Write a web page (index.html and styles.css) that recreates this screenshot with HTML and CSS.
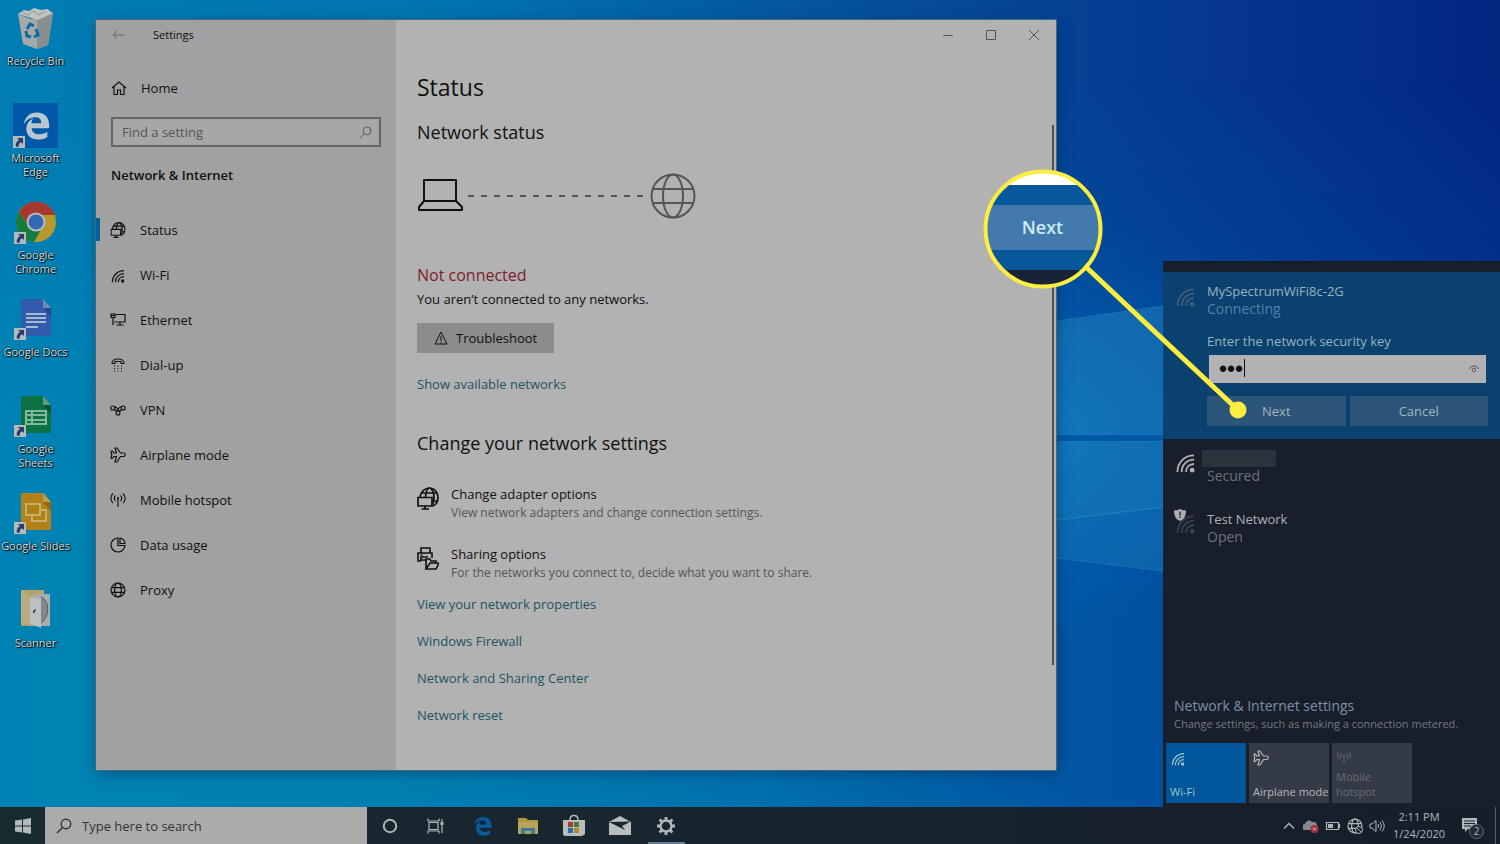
FILE: index.html
```
<!DOCTYPE html>
<html lang="en">
<head>
<meta charset="utf-8">
<title>Settings</title>
<link rel="stylesheet" href="styles.css">
</head>
<body>
<svg class="defs" aria-hidden="true">
  <symbol id="wifi" viewBox="0 0 20 20"><g fill="none" stroke="currentColor" stroke-width="1.900"><path d="M1.500 19C1.500 9 9 1.500 19 1.500"/><path d="M6 19C6 11.500 11.500 6 19 6"/><path d="M10.500 19C10.500 14 14 10.500 19 10.500"/></g><circle cx="17" cy="17" r="2.500" fill="currentColor"/></symbol>
  <symbol id="globe" viewBox="0 0 16 16"><g fill="none" stroke="currentColor" stroke-width="1.200"><circle cx="8" cy="8" r="7"/><ellipse cx="8" cy="8" rx="3.400" ry="7"/><path d="M1.400 5.700h13.200M1.400 10.300h13.200"/></g></symbol>
  <symbol id="netglobe" viewBox="0 0 22 23"><g fill="none" stroke="currentColor" stroke-width="1.700"><path d="M3 10C4 4.500 8 1 12.500 1S21 5 21 10.500c0 4-2 7-5 8.500"/><path d="M8.500 10C9 5 10.500 1 12.500 1S17 5 17 10.500c0 4-1 6.500-2 8M5 6h15M16 14h5"/><path d="M1 10.500h14V19H1zM8 19v3M4.500 22h7.500"/></g></symbol>
  <symbol id="plane" viewBox="0 0 16 16"><path d="M5 1h2l3.500 5H14c1.700.300 1.700 3.200 0 3.500h-3.500L7 15H5l1.500-5.500H3.700L2.500 11.500H1L1.700 7.800 1 4h1.500l1.200 2h2.800z" fill="none" stroke="currentColor" stroke-width="1.200" stroke-linejoin="round"/></symbol>
  <symbol id="hotspot" viewBox="0 0 16 16"><g fill="none" stroke="currentColor" stroke-width="1.100"><path d="M3 1.500C.200 4 .200 8.500 3 11M5.500 3.500c-1.600 1.500-1.600 4 0 5.500M13 1.500c2.800 2.500 2.800 7 0 9.500M10.500 3.500c1.600 1.500 1.600 4 0 5.500M8 6v9"/></g><circle cx="8" cy="6" r="1" fill="currentColor"/></symbol>
  <symbol id="search" viewBox="0 0 16 16"><g fill="none" stroke="currentColor" stroke-width="1.200"><circle cx="10" cy="6" r="4.800"/><path d="M6.500 9.500L1 15"/></g></symbol>
  <symbol id="edge" viewBox="0 0 32 32"><path d="M2 15C3 6 9 1 17 1c9 0 14 6 14 14v4H11c.500 5 4 7 9 7 3 0 6-1 9-2.500V29c-3 2-7 3-11 3C10 32 5 27 5 20c0-6 3-10 8-12-1.500 1.500-2 3.500-2 5.500h11C22 9 20 6.500 16 6.500 10 6.500 5 9 2 15z" fill="currentColor"/></symbol>
  <symbol id="shortcut" viewBox="0 0 12 12"><path d="M0 0h12v12H0z" fill="#b5b9bc"/><path d="M4 2h6v6L8 6.200C6 7.500 5.500 9 5.800 10.800H3C2 8 3.500 5.500 6 4z" fill="#253e6b"/></symbol>
</svg>

<div class="screen">
  <main class="desktop">
    <svg class="wallpaper" viewBox="0 0 1500 807" preserveAspectRatio="none" aria-hidden="true">
      <defs>
        <linearGradient id="base" x1="0" x2="1" y1="0" y2="0"><stop offset="0" stop-color="#007eb3"/><stop offset=".3" stop-color="#0074b0"/><stop offset=".6" stop-color="#064d99"/><stop offset=".78" stop-color="#053a90"/><stop offset="1" stop-color="#032681"/></linearGradient>
        <linearGradient id="low" x1="0" x2="1" y1="0" y2="0"><stop offset="0" stop-color="#0083b4"/><stop offset=".25" stop-color="#0080b1"/><stop offset=".5" stop-color="#0070ad"/><stop offset=".72" stop-color="#0055a2"/><stop offset="1" stop-color="#003f93"/></linearGradient>
        <linearGradient id="fade" x1="0" x2="0" y1="0" y2="1"><stop offset=".1" stop-color="#000"/><stop offset=".65" stop-color="#fff"/></linearGradient>
        <mask id="lowmask"><path d="M0 0h1500v807H0z" fill="url(#fade)"/></mask>
        <radialGradient id="glow"><stop offset="0" stop-color="#0879c6" stop-opacity=".6"/><stop offset="1" stop-color="#0060b4" stop-opacity="0"/></radialGradient>
      </defs>
      <path d="M0 0h1500v807H0z" fill="url(#base)"/>
      <path d="M0 0h1500v807H0z" fill="url(#low)" mask="url(#lowmask)"/>
      <ellipse cx="1050" cy="430" rx="250" ry="210" fill="url(#glow)"/>
      <g fill="#2388c0" fill-opacity=".45" stroke="#2b94c4" stroke-opacity=".4">
        <path d="M1000 329L1163 306V435H1000z"/><path d="M1000 441h163v66l-163 20z"/><path d="M1000 527l163-20v64l-163-20z" fill-opacity=".3"/>
      </g>
      <path d="M1000 435h163v6h-163z" fill="#0059a4"/>
    </svg>

    <nav class="shortcuts" aria-label="Desktop">
      <a class="shortcut" href="#"><svg class="shortcut-icon" viewBox="0 0 45 45"><path d="M5 8l13 5 22-6-5 32-11 4-14-5z" fill="#a6a9aa"/><path d="M24 12l16-5-5 32-11 4z" fill="#898e90"/><path d="M5 8l6-4 5 1 5-3 7 2 6-1 6 4-15 7z" fill="#c0c2c2"/><path d="M10 7l5 2 5-4 6 4 6-4" fill="none" stroke="#8e9495"/><g fill="none" stroke="#0d68a5" stroke-width="3"><path d="M14 23l3-5 4 2M23 23l2 6-4 2M18 31l-4-1-1-5"/></g></svg><span>Recycle Bin</span></a>
      <a class="shortcut" href="#"><svg class="shortcut-icon" viewBox="0 0 45 45"><path d="M0 0h45v45H0z" fill="#0058a8"/><use href="#edge" x="9" y="8" width="28" height="29" color="#b8c8ce"/><use href="#shortcut" y="33" width="12" height="12"/></svg><span>Microsoft<br>Edge</span></a>
      <a class="shortcut" href="#"><svg class="shortcut-icon" viewBox="0 0 45 45"><circle cx="23" cy="22" r="20" fill="#b8982b"/><path d="M5.700 12A20 20 0 0 1 42 15H23a8 8 0 0 0-7 11z" fill="#a73830"/><path d="M5.700 12A20 20 0 0 0 21 42l9-16c-4 6-11 5-14 0z" fill="#177b3e"/><circle cx="23" cy="22" r="9.500" fill="#b8bdc0"/><circle cx="23" cy="22" r="7.500" fill="#3467b5"/><use href="#shortcut" x="1" y="32" width="12" height="12"/></svg><span>Google<br>Chrome</span></a>
      <a class="shortcut" href="#"><svg class="shortcut-icon" viewBox="0 0 45 45"><path d="M8 2h22l8 9v28H8z" fill="#315cac"/><path d="M30 2l8 9h-8z" fill="#718dba"/><path d="M30 11h8v9z" fill="#244a91"/><path d="M13 17h20M13 21h20M13 25h20M13 30h12" stroke="#a7b8cf" stroke-width="2"/><use href="#shortcut" x="1" y="31" width="12" height="12"/></svg><span>Google Docs</span></a>
      <a class="shortcut" href="#"><svg class="shortcut-icon" viewBox="0 0 45 45"><path d="M8 2h22l8 9v28H8z" fill="#0c7145"/><path d="M30 2l8 9h-8z" fill="#5c9c7d"/><path d="M30 11h8v9z" fill="#075535"/><path d="M13 17h20v13H13zM13 21h20M13 26h20M19 17v13" fill="none" stroke="#83b899" stroke-width="2"/><use href="#shortcut" x="1" y="31" width="12" height="12"/></svg><span>Google<br>Sheets</span></a>
      <a class="shortcut" href="#"><svg class="shortcut-icon" viewBox="0 0 45 45"><path d="M8 2h22l8 9v28H8z" fill="#b28017"/><path d="M30 2l8 9h-8z" fill="#b7a052"/><path d="M30 11h8v9z" fill="#94670d"/><path d="M13 13h14v11H13z" fill="none" stroke="#c0b36b" stroke-width="2"/><path d="M27 19h6v11H19v-6" fill="none" stroke="#c0b36b" stroke-width="2"/><use href="#shortcut" x="1" y="31" width="12" height="12"/></svg><span>Google Slides</span></a>
      <a class="shortcut" href="#"><svg class="shortcut-icon" viewBox="0 0 45 45"><path d="M8 2h23v36H8z" fill="#b7a36a"/><path d="M20 6h17v32H20z" fill="#aaacae"/><path d="M28 9c9 3 9 20 0 26" fill="#83888d" stroke="#555c63"/><path d="M8 2l10 9v27L8 34z" fill="#b9ad7f"/><path d="M17 9l11 2v29l-11-5z" fill="#bcc0c1"/><path d="M23 21q-4 1-3 4 2 1 3-4z" fill="#3d454b"/></svg><span>Scanner</span></a>
    </nav>

    <section class="window" aria-label="Settings">
      <aside class="sidebar">
        <header class="titlebar"><button class="back" type="button" aria-label="Back"><svg viewBox="0 0 12 10"><path d="M12 5H1M5 1L1 5l4 4" fill="none" stroke="currentColor"/></svg></button><span>Settings</span></header>
        <a class="nav-link home" href="#"><svg class="nav-icon" viewBox="0 0 16 16"><path d="M1 8l7-6 7 6M3 6.500V14.500h3.500V10h3v4.500H13V6.500" fill="none" stroke="currentColor" stroke-width="1.200"/></svg>Home</a>
        <label class="find"><input type="text" placeholder="Find a setting" aria-label="Find a setting"><svg viewBox="0 0 16 16"><use href="#search"/></svg></label>
        <h2 class="group-title">Network &amp; Internet</h2>
        <nav class="nav-list">
          <a class="nav-link current" href="#"><svg class="nav-icon" viewBox="0 0 22 23"><use href="#netglobe"/></svg>Status</a>
          <a class="nav-link" href="#"><svg class="nav-icon" viewBox="-2 -4 24 24"><use href="#wifi" width="20" height="20"/></svg>Wi-Fi</a>
          <a class="nav-link" href="#"><svg class="nav-icon" viewBox="0 0 16 16"><g fill="none" stroke="currentColor" stroke-width="1.200"><path d="M6 2.500h9V10H4.500M10 10v3M6.500 13h7M1 2h4v3.500H1zM3 5.500v7.500M1 3.500h4"/></g></svg>Ethernet</a>
          <a class="nav-link" href="#"><svg class="nav-icon" viewBox="0 0 16 16"><path d="M2 6.500C1 .500 15 .500 14 6.500h-3v-2H5v2z" fill="none" stroke="currentColor" stroke-width="1.100"/><path d="M4 9h8M4 11.500h8M4 14h8" stroke="currentColor" stroke-dasharray="1 2.500"/></svg>Dial-up</a>
          <a class="nav-link" href="#"><svg class="nav-icon" viewBox="0 0 16 16"><g fill="none" stroke="currentColor" stroke-width="1.100"><circle cx="2.800" cy="6" r="2"/><circle cx="13.200" cy="6" r="2"/><circle cx="8" cy="11" r="2"/><path d="M4.500 5c2-1 2.500 2 5 4.500M11.500 5C9.500 4 8.500 7 6.500 9.500M4.500 7.500l2 2M11.500 7.500l-2 2"/></g></svg>VPN</a>
          <a class="nav-link" href="#"><svg class="nav-icon" viewBox="0 0 16 16"><use href="#plane"/></svg>Airplane mode</a>
          <a class="nav-link" href="#"><svg class="nav-icon" viewBox="0 0 16 16"><use href="#hotspot"/></svg>Mobile hotspot</a>
          <a class="nav-link" href="#"><svg class="nav-icon" viewBox="0 0 16 16"><g fill="none" stroke="currentColor" stroke-width="1.200"><path d="M8 1A7 7 0 1 0 15 8.500H8z"/><path d="M10 1q4.500 1 5 5.500h-5z"/></g></svg>Data usage</a>
          <a class="nav-link" href="#"><svg class="nav-icon" viewBox="0 0 16 16"><use href="#globe"/></svg>Proxy</a>
        </nav>
      </aside>
      <div class="page">
        <header class="controls">
          <button type="button" aria-label="Minimize"><svg viewBox="0 0 10 10"><path d="M0 5.500h10" stroke="currentColor"/></svg></button>
          <button type="button" aria-label="Maximize"><svg viewBox="0 0 10 10"><path d="M.5.5h9v9h-9z" fill="none" stroke="currentColor"/></svg></button>
          <button type="button" aria-label="Close"><svg viewBox="0 0 10 10"><path d="M0 0l10 10M10 0L0 10" stroke="currentColor"/></svg></button>
        </header>
        <div class="content">
          <h1>Status</h1>
          <h2>Network status</h2>
          <svg class="diagram" viewBox="0 0 280 48" role="img" aria-label="Computer is not connected to the internet"><g fill="none" stroke="#101010" stroke-width="2"><path d="M7 8h32v21H7zM7 29l-5 6v3h43v-3l-6-6" stroke-linejoin="round"/></g><path d="M51 24h177" stroke="#555" stroke-width="2" stroke-dasharray="6 7"/><g fill="none" stroke="#555" stroke-width="2"><circle cx="256" cy="24" r="21.500"/><ellipse cx="256" cy="24" rx="10" ry="21.500"/><path d="M236 17h40M236 31h40"/></g></svg>
          <p class="alert">Not connected</p>
          <p class="detail">You aren’t connected to any networks.</p>
          <button class="troubleshoot" type="button"><svg viewBox="0 0 14 14"><path d="M7 1l6 12H1zM7 5v5M7 11v1" fill="none" stroke="currentColor"/></svg>Troubleshoot</button>
          <a class="text-link" href="#">Show available networks</a>
          <h2 class="change">Change your network settings</h2>
          <a class="option" href="#"><svg viewBox="0 0 22 23"><use href="#netglobe"/></svg><span class="option-text"><span>Change adapter options</span><small>View network adapters and change connection settings.</small></span></a>
          <a class="option" href="#"><svg viewBox="0 0 22 23"><path d="M4 6V1h9v5M4 14H1V6h14v5M4 14v-4h7M3.500 8h2M9 22V12h4l1 2h5v2M9 22l4-6h9l-3 6zM4 13h5" fill="none" stroke="currentColor" stroke-width="1.600"/></svg><span class="option-text"><span>Sharing options</span><small>For the networks you connect to, decide what you want to share.</small></span></a>
          <nav class="links"><a class="text-link" href="#">View your network properties</a><a class="text-link" href="#">Windows Firewall</a><a class="text-link" href="#">Network and Sharing Center</a><a class="text-link" href="#">Network reset</a></nav>
        </div>
        <div class="scrollbar"></div>
      </div>
    </section>

    <section class="flyout" aria-label="Networks">
      <form class="network joining">
        <svg class="signal" viewBox="0 0 20 20"><use href="#wifi"/></svg>
        <div class="network-body">
          <strong>MySpectrumWiFi8c-2G</strong><span class="muted">Connecting</span>
          <label class="key-label" for="key">Enter the network security key</label>
          <div class="key"><input id="key" type="password" value="abc"><i class="caret"></i><button type="button" aria-label="Show password"><svg viewBox="0 0 12 10"><path d="M1 5C3 1 9 1 11 5" fill="none" stroke="currentColor"/><circle cx="6" cy="6" r="1.800" fill="none" stroke="currentColor"/></svg></button></div>
          <div class="actions"><button type="button">Next</button><button type="button">Cancel</button></div>
        </div>
      </form>
      <div class="network secured"><svg class="signal" viewBox="0 0 20 20"><use href="#wifi"/></svg><div class="network-body"><span class="redacted"></span><span class="muted">Secured</span></div></div>
      <div class="network open"><svg class="signal" viewBox="0 0 20 20"><use href="#wifi"/></svg><svg class="shield" viewBox="0 0 12 12"><path d="M6 0c2 1 4 1.500 6 1.500C12 7 10 10.500 6 12 2 10.500 0 7 0 1.500 2 1.500 4 1 6 0z" fill="#adb0b3"/><path d="M6 2.500v4M6 7.500V9" stroke="#292f37" stroke-width="1.500"/></svg><div class="network-body"><strong>Test Network</strong><span class="muted">Open</span></div></div>
      <footer class="flyout-footer">
        <a class="network-settings" href="#">Network &amp; Internet settings</a><p>Change settings, such as making a connection metered.</p>
        <div class="tiles">
          <button class="tile active" type="button"><svg viewBox="-2 -4 24 24"><use href="#wifi" width="20" height="20"/></svg><span>Wi-Fi</span></button>
          <button class="tile" type="button"><svg viewBox="0 0 16 16"><use href="#plane"/></svg><span>Airplane mode</span></button>
          <button class="tile unavailable" type="button"><svg viewBox="0 0 16 16"><use href="#hotspot"/></svg><span>Mobile hotspot</span></button>
        </div>
      </footer>
      <div class="callout">
        <svg viewBox="0 0 264 250" aria-hidden="true"><defs><clipPath id="lens"><circle cx="60" cy="60" r="57"/></clipPath></defs><g clip-path="url(#lens)"><path d="M0 0h120v120H0z" fill="#07579b"/><path d="M0 0h120v16H0z" fill="#fff"/><path d="M0 36h120v45H0z" fill="#427aad"/><path d="M0 101h120v20H0z" fill="#182338"/></g><path d="M103 98L255 241" stroke="#fced3e" stroke-width="5"/><circle cx="60" cy="60" r="57.500" fill="none" stroke="#fced3e" stroke-width="4"/><circle cx="255" cy="241" r="8.500" fill="#fced3e"/></svg>
        <span>Next</span>
      </div>
    </section>
  </main>

  <footer class="taskbar">
    <button class="start" type="button" aria-label="Start"><svg viewBox="0 0 16 16"><path d="M0 2.500L7 1.500v6H0zM8 1.400L16 0v7.500H8zM0 8.500h7v6l-7-1zM8 8.500h8V16l-8-1.400z" fill="#b3babc"/></svg></button>
    <label class="task-search"><svg viewBox="0 0 16 16"><use href="#search"/></svg><input type="text" placeholder="Type here to search" aria-label="Type here to search"></label>
    <button class="task" type="button" aria-label="Cortana"><svg viewBox="0 0 24 24"><circle cx="12" cy="12" r="6.200" fill="none" stroke="currentColor" stroke-width="2"/></svg></button>
    <button class="task" type="button" aria-label="Task View"><svg viewBox="0 0 24 24"><g fill="none" stroke="currentColor" stroke-width="1.200"><path d="M5 8.500h9v7H5zM4 4.500V7h11V4.500M4 19.500V17h11v2.500M18 5v14"/></g><path d="M16.500 8h3v3h-3z" fill="currentColor"/></svg></button>
    <button class="task" type="button" aria-label="Microsoft Edge"><svg viewBox="0 0 24 24"><use href="#edge" x="3" y="2" width="19" height="20" color="#075ca0"/></svg></button>
    <button class="task" type="button" aria-label="File Explorer"><svg viewBox="0 0 24 24"><path d="M2 4h8l2 2h10v14H2z" fill="#b59636"/><path d="M2 8h20v12H2z" fill="#b8a458"/><path d="M5 20v-6h14v6h-4v-3H9v3z" fill="#44799d"/></svg></button>
    <button class="task" type="button" aria-label="Microsoft Store"><svg viewBox="0 0 24 24"><path d="M8 6c0-6 8-6 8 0" fill="none" stroke="#b7babb" stroke-width="1.500"/><path d="M1 6h22v14l-3 2H3l-2-1z" fill="#b9bcbd"/><path d="M6 8h5v5H6z" fill="#a43f2c"/><path d="M12 8h5v5h-5z" fill="#457c38"/><path d="M6 14h5v5H6z" fill="#246eaa"/><path d="M12 14h5v5h-5z" fill="#b28f2a"/></svg></button>
    <button class="task" type="button" aria-label="Mail"><svg viewBox="0 0 24 24"><path d="M1 8l11-6 11 6v13H1z" fill="#b9bebf"/><path d="M1 8l22-.500L14 12l3 4z" fill="#1b272d"/></svg></button>
    <button class="task running" type="button" aria-label="Settings"><svg viewBox="0 0 24 24"><circle cx="12" cy="12" r="5.500" fill="none" stroke="currentColor" stroke-width="2.400"/><path d="M12 3v3M12 18v3M3 12h3M18 12h3M5.600 5.600l2.200 2.200M16.200 16.200l2.200 2.200M18.400 5.600l-2.200 2.200M7.800 16.200l-2.200 2.200" stroke="currentColor" stroke-width="2.800"/></svg></button>
    <div class="tray">
      <svg viewBox="0 0 16 16"><path d="M3 10.500l5-5 5 5" fill="none" stroke="currentColor" stroke-width="1.300"/></svg>
      <svg viewBox="0 0 16 16"><path d="M2 12a3 3 0 0 1 0-6 4 4 0 0 1 7-2 4 4 0 0 1 5 5v3z" fill="#85898e"/><circle cx="11.500" cy="11" r="4" fill="#a32f38"/><path d="M10 9.500l3 3M13 9.500l-3 3" stroke="#d3b4b7"/></svg>
      <svg viewBox="0 0 16 16"><path d="M1.500 4.500h12v7h-12zM14.500 6v4" fill="none" stroke="currentColor" stroke-width="1.200"/><path d="M3 6h5v4H3z" fill="currentColor"/></svg>
      <svg viewBox="0 0 16 16"><use href="#globe"/><circle cx="12" cy="12" r="3.500" fill="#141e29" stroke="currentColor"/><path d="M10 10l4 4" stroke="currentColor"/></svg>
      <svg viewBox="0 0 16 16"><path d="M1 6h2l4-3.500v11L3 10H1zM9 6q1.500 2 0 4M11 4q3 4 0 8M13 2.500q4.500 5.500 0 11" fill="none" stroke="currentColor"/></svg>
    </div>
    <time class="clock" datetime="2020-01-24T14:11"><span>2:11 PM</span><span>1/24/2020</span></time>
    <button class="notices" type="button" aria-label="2 notifications"><svg viewBox="0 0 18 18"><path d="M1 1h15v11H7l-3 3v-3H1z" fill="#b2b6b9"/><path d="M3 4h11M3 6.500h11M3 9h7" stroke="#1a2531"/></svg><span>2</span></button>
    <div class="peek"></div>
  </footer>
</div>
</body>
</html>
```
FILE: styles.css
```
* { box-sizing: border-box; }
body { margin: 0; font-family: "Open Sans", "Noto Sans", sans-serif; font-size: 13px; line-height: 20px; color: #101010; }
h1, h2, p { margin: 0; font-weight: 400; }
a { color: inherit; text-decoration: none; }
button, input { font: inherit; color: inherit; border: 0; background: none; padding: 0; margin: 0; min-width: 0; outline: 0; border-radius: 0; }
svg { display: block; flex-shrink: 0; }
.defs { position: absolute; width: 0; height: 0; }

.screen { display: flex; flex-direction: column; min-height: 100vh; }
.desktop { position: relative; flex: 1; overflow: hidden; background: #0078b0; }
.wallpaper { position: absolute; inset: 0; width: 100%; height: 100%; }

.shortcuts { position: relative; display: grid; grid-auto-rows: 97px; width: 71px; padding-top: 6px; }
.shortcut { display: flex; flex-direction: column; align-items: center; gap: 3px; font-size: 11px; line-height: 14px; text-align: center; white-space: nowrap; color: #d4dbdf; text-shadow: 1px 1px 1px #000, 0 0 2px #000; }
.shortcut-icon { width: 45px; height: 45px; }

.window { position: absolute; left: 96px; top: 20px; bottom: 37px; width: 64%; display: flex; background: #b2b2b2; box-shadow: 0 0 0 1px #3f6a86, 1px 3px 12px #002c5590; }
.sidebar { width: 300px; flex-shrink: 0; background: #a1a1a1; }
.titlebar { display: flex; align-items: center; gap: 29px; height: 30px; padding-left: 16px; font-size: 11px; }
.back { color: #666; }
.back svg { width: 12px; height: 10px; }
.nav-link { display: flex; align-items: center; gap: 14px; height: 45px; padding-left: 14px; }
.nav-link.home { height: 30px; margin-top: 23px; padding-left: 15px; }
.nav-icon { width: 16px; height: 16px; }
.nav-link.current { background: linear-gradient(#075e98, #075e98) 0 center / 4px 23px no-repeat; }
.find { display: flex; align-items: center; height: 30px; margin: 14px 15px 0; padding: 0 7px 0 9px; border: 2px solid #656565; background: #a7a7a7; color: #555; }
.find input { flex: 1; }
.find svg { width: 13px; height: 13px; }
.find input::placeholder { color: #555; opacity: 1; }
.group-title { margin: 18px 15px 0; font-size: 13px; font-weight: 600; }
.nav-list { margin-top: 22px; }

.page { position: relative; flex: 1; min-width: 0; }
.controls { display: flex; justify-content: flex-end; height: 30px; padding-right: 1px; color: #555; }
.controls button { display: grid; place-items: center; width: 43px; }
.controls svg { width: 10px; height: 10px; }
.content { display: flex; flex-direction: column; align-items: flex-start; padding: 21px 22px 0 21px; }
.content h1 { font-size: 23px; line-height: 32px; }
.content h2 { margin-top: 17px; font-size: 18px; line-height: 24px; }
.diagram { width: 280px; height: 48px; margin-top: 28px; }
.alert { margin-top: 43px; font-size: 16px; line-height: 24px; color: #7e1c26; }
.detail { margin-top: 2px; }
.troubleshoot { display: flex; align-items: center; gap: 8px; height: 30px; margin: 14px 0 21px; padding: 0 17px; background: #8c8c8c; }
.troubleshoot svg { width: 14px; height: 14px; }
.text-link { color: #1d5265; }
.content .change { margin-top: 37px; }
.option { display: flex; gap: 12px; margin-top: 29px; }
.option + .option { margin-top: 22px; }
.option > svg { width: 22px; height: 23px; margin-top: 3px; }
.option-text { display: flex; flex-direction: column; }
.option small { font-size: 12px; line-height: 18px; color: #555; }
.links { display: flex; flex-direction: column; align-items: flex-start; gap: 17px; margin-top: 12px; }
.scrollbar { position: absolute; right: 2px; top: 14%; bottom: 14%; width: 2px; background: #505050; }

.flyout { position: absolute; right: 0; top: 261px; bottom: 0; width: 337px; display: flex; flex-direction: column; padding-top: 10px; background: #181f2b; color: #aeb2b6; border-top: 1px solid #101a2a; }
.network { position: relative; display: flex; padding: 0 12px 0 13px; gap: 12px; }
.signal { width: 19px; height: 19px; }
.network-body { display: flex; flex: 1; min-width: 0; flex-direction: column; line-height: 18px; }
.network strong { font-weight: 400; }
.muted { color: #6c727b; font-size: 14px; }
.joining { padding-top: 10px; padding-bottom: 13px; background: #0a416f; }
.joining .signal { margin-top: 6px; color: #3d5e7b; }
.joining strong, .key-label { color: #98b3bc; }
.joining .muted { color: #5681aa; }
.key-label { margin-top: 14px; }
.key { position: relative; display: flex; align-items: center; height: 28px; margin: 5px 2px 13px; padding: 0 6px 0 10px; background: #b2b2b4; color: #101010; }
.key input { flex: 1; font-size: 23px; line-height: 24px; font-family: "Liberation Sans", sans-serif; }
.key .caret { position: absolute; left: 35px; top: 4px; width: 1px; height: 18px; background: #101010; }
.key button { color: #555; }
.key button svg { width: 12px; height: 10px; }
.actions { display: grid; grid-template-columns: 1fr 1fr; gap: 4px; }
.actions button { height: 30px; background: #2c5579; color: #a0b6bf; }
.secured { padding-top: 11px; }
.secured .signal { margin-top: 4px; color: #aeb2b6; }
.redacted { width: 74px; height: 17px; margin-left: -5px; background: #2b323c; }
.open { margin-top: 25px; }
.open .signal { margin-top: 5px; color: #3b414a; }
.shield { position: absolute; left: 11px; top: -1px; width: 12px; height: 12px; }
.flyout-footer { margin-top: auto; padding: 0 3px 4px; }
.network-settings { display: block; margin-left: 8px; font-size: 14px; line-height: 18px; color: #7c91a8; }
.flyout-footer p { margin: 0 0 10px 8px; font-size: 11px; line-height: 18px; color: #747980; }
.tiles { display: grid; grid-template-columns: repeat(3, 80px); gap: 3px; }
.tile { display: flex; flex-direction: column; justify-content: space-between; align-items: flex-start; height: 60px; padding: 7px 4px 4px; background: #353b46; font-size: 11px; line-height: 15px; text-align: left; color: #b5b8bb; }
.tile svg { width: 16px; height: 16px; }
.tile span { margin-right: -4px; }
.tile.active { background: #00569a; color: #a0c4cc; }
.tile.unavailable { color: #676c74; }
.tile.unavailable svg { height: 14px; }
.tile.unavailable span { width: 50px; }
.callout { position: absolute; left: -180px; top: -93px; width: 264px; height: 250px; pointer-events: none; }
.callout svg { width: 264px; height: 250px; }
.callout span { position: absolute; left: 0; top: 46px; width: 119px; text-align: center; font-size: 18px; line-height: 24px; font-weight: 600; color: #cdeaf6; }

.taskbar { display: flex; align-items: stretch; height: 37px; background: linear-gradient(90deg, #192a31, #18252e 50%, #151e2a); color: #b2b6b9; }
.start { display: grid; place-items: center; width: 45px; }
.start svg { width: 16px; height: 16px; }
.task-search { display: flex; align-items: center; gap: 10px; width: 322px; padding-left: 11px; background: #ababab; color: #292929; }
.task-search svg { width: 16px; height: 16px; }
.task-search input { flex: 1; }
.task-search input::placeholder { color: #333; opacity: 1; }
.task { display: grid; place-items: center; width: 46px; }
.task svg { width: 24px; height: 24px; }
.running { background: linear-gradient(#637d96, #637d96) center bottom / 37px 2px no-repeat; }
.tray { display: flex; align-items: center; gap: 6px; margin-left: auto; }
.tray svg { width: 16px; height: 16px; }
.clock { display: flex; flex-direction: column; justify-content: center; width: 68px; padding-bottom: 2px; text-align: center; font-size: 11px; line-height: 17px; }
.notices { position: relative; display: grid; place-items: center; width: 34px; }
.notices svg { width: 18px; height: 18px; }
.notices span { position: absolute; left: 16px; top: 17px; width: 15px; height: 15px; border: 1px solid #656b72; border-radius: 50%; background: #202a35; font-size: 10px; line-height: 13px; text-align: center; }
.peek { width: 5px; margin-left: 8px; border-left: 1px solid #555d65; }
```
